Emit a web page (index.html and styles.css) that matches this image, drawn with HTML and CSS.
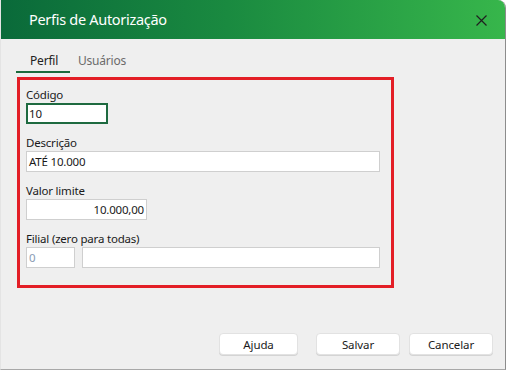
FILE: index.html
```html
<!DOCTYPE html>
<html lang="pt">
<head>
<meta charset="utf-8">
<title>Perfis de Autorização</title>
<link rel="stylesheet" href="styles.css">
</head>
<body>
<div class="window">
  <div class="titlebar">
    <span class="title">Perfis de Autorização</span>
    <span class="close" aria-label="Fechar">
      <svg width="11" height="11" viewBox="0 0 11 11"><path d="M0.5 0.5 L10.5 10.5 M10.5 0.5 L0.5 10.5" stroke="#1f1f1f" stroke-width="1.2" fill="none"/></svg>
    </span>
  </div>
  <div class="content">
    <div class="tabs">
      <div class="tab active">Perfil</div>
      <div class="tab">Usuários</div>
    </div>
    <div class="panel">
      <div class="field">
        <label class="label">Código</label>
        <div class="input input-code">10</div>
      </div>
      <div class="field">
        <label class="label">Descrição</label>
        <div class="input input-desc">ATÉ 10.000</div>
      </div>
      <div class="field">
        <label class="label">Valor limite</label>
        <div class="input input-valor">10.000,00</div>
      </div>
      <div class="field">
        <label class="label">Filial (zero para todas)</label>
        <div class="row">
          <div class="input input-filial muted">0</div>
          <div class="input input-filial-name"></div>
        </div>
      </div>
    </div>
    <div class="buttons">
      <button class="btn btn-help">Ajuda</button>
      <button class="btn btn-save">Salvar</button>
      <button class="btn btn-cancel">Cancelar</button>
    </div>
  </div>
</div>
</body>
</html>
```

FILE: styles.css
```css
* { box-sizing: border-box; }
html, body { margin: 0; padding: 0; background: #ffffff; }
body {
  font-family: "Noto Sans", "Open Sans", sans-serif;
  font-size: 11.5px;
  letter-spacing: -0.2px;
  color: #1a1a1a;
}
.window {
  width: 506px;
  height: 370px;
  background: #efefef;
  border-right: 1px solid #8c8c8c;
  border-bottom: 1px solid #a8a8a8;
  border-left: 1px solid #e4e4e4;
  border-top-right-radius: 8px;
  overflow: hidden;
  display: flex;
  flex-direction: column;
}
.titlebar {
  height: 39px;
  flex: none;
  background: linear-gradient(to right, #0a6a3a 0%, #1a8a40 45%, #37b64b 100%);
  display: flex;
  align-items: center;
  justify-content: space-between;
  padding-left: 28px;
  padding-right: 18px;
  color: #ffffff;
}
.title {
  font-size: 14.5px;
  letter-spacing: -0.3px;
  margin-top: -1px;
}
.close { display: flex; margin-top: 1px; }
.content {
  flex: 1;
  display: flex;
  flex-direction: column;
  padding: 10px 0 0 15px;
}
.tabs {
  display: flex;
  height: 24px;
}
.tab {
  padding: 3px 9px 0 8px;
  color: #6b6b6b;
  font-size: 12px;
}
.tab.active {
  width: 54px;
  padding-left: 14px;
  color: #222;
  border-bottom: 2px solid #1b6b3e;
}
.panel {
  margin-top: 4px;
  margin-left: 1px;
  width: 377px;
  height: 211px;
  border: 3px solid #e31e26;
  padding: 7px 0 0 6px;
  display: flex;
  flex-direction: column;
  gap: 11px;
}
.field { display: flex; flex-direction: column; align-items: flex-start; }
.label {
  display: block;
  height: 16px;
  line-height: 16px;
  color: #1a1a1a;
}
.input {
  height: 21px;
  background: #ffffff;
  border: 1px solid #cfcfcf;
  line-height: 19px;
  padding: 0 2px;
  white-space: nowrap;
  flex: none;
}
.input-code { width: 82px; border: 2px solid #1e6a40; line-height: 17px; padding-left: 1px; }
.input-desc { width: 354px; }
.input-valor { width: 121px; text-align: right; }
.input-filial { width: 49px; }
.input-filial-name { width: 298px; }
.muted { color: #8a9cb4; }
.row { display: flex; gap: 7px; }
.buttons {
  display: flex;
  margin-top: auto;
  margin-bottom: 14px;
  padding-left: 203px;
}
.btn {
  font-family: inherit;
  font-size: 11.5px;
  letter-spacing: -0.1px;
  height: 22px;
  background: #ffffff;
  border: 1px solid #e2e2e2;
  border-radius: 4px;
  box-shadow: 0 1px 0 #d4d4d4;
  color: #1a1a1a;
  padding: 0;
}
.btn-help { width: 79px; margin-right: 18px; }
.btn-save { width: 84px; margin-right: 9px; }
.btn-cancel { width: 84px; }
```
